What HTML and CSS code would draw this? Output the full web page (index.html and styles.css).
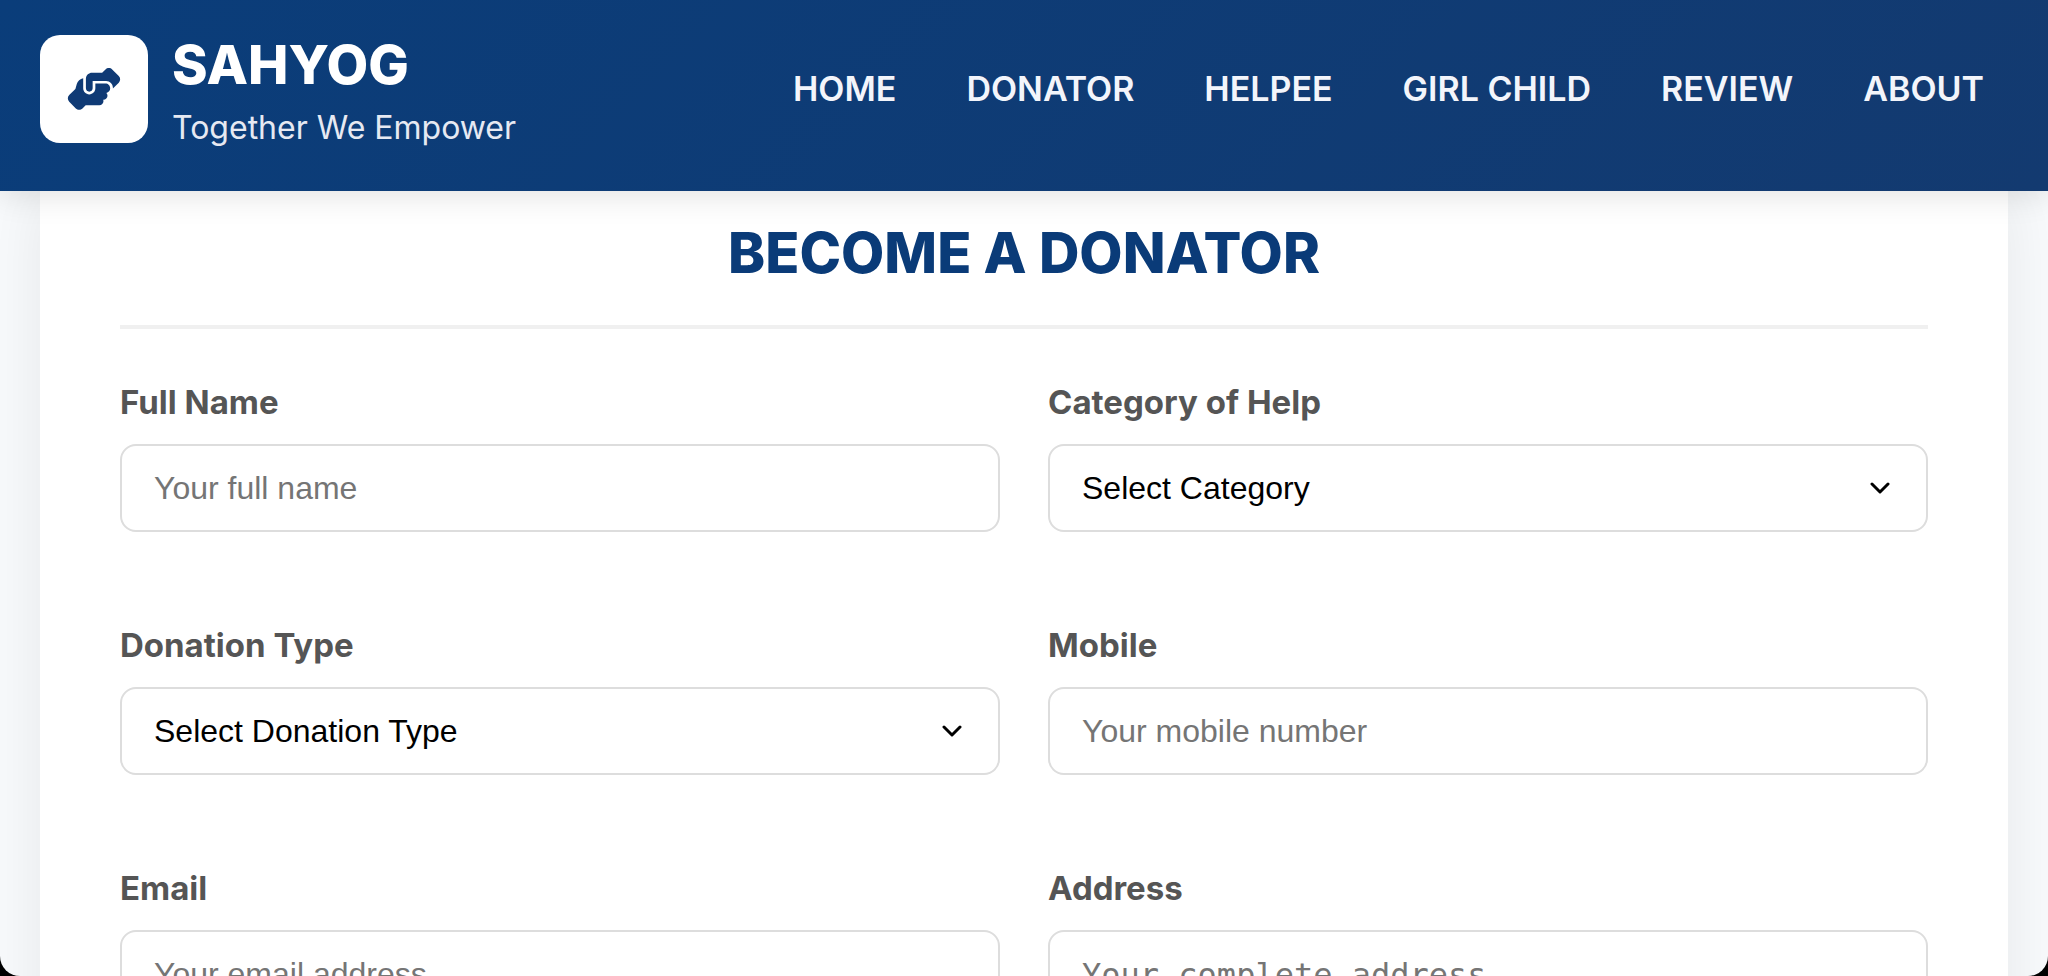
FILE: index.html
```html
<!DOCTYPE html>
<html lang="en">
<head>
<meta charset="utf-8">
<meta name="viewport" content="width=device-width, initial-scale=1">
<title>Sahyog - Become a Donator</title>
<link rel="stylesheet" href="styles.css">
</head>
<body>
<div class="app">
  <header class="header">
    <div class="brand">
      <div class="logo">
        <svg class="logo-icon" viewBox="0 0 640 512" aria-hidden="true"><path d="M544 248v3.3l69.7-69.7c21.9-21.9 21.9-57.3 0-79.2L535.6 24.4c-21.9-21.9-57.3-21.9-79.2 0L416.3 64.5c-2.7-.3-5.5-.5-8.3-.5H296c-37.1 0-67.6 28-71.6 64H224V248c0 22.1 17.9 40 40 40s40-17.9 40-40V160H464c44.2 0 80 35.8 80 80v8zM336 192v56c0 39.8-32.2 72-72 72s-72-32.2-72-72V129.4c-35.9 6.2-65.8 32.3-76 68.2L99.5 255.2 26.3 328.4c-21.9 21.9-21.9 57.3 0 79.2l78.1 78.1c21.9 21.9 57.3 21.9 79.2 0l37.7-37.7c.9 0 1.8 .1 2.7 .1H384c26.5 0 48-21.5 48-48c0-5.6-1-11-2.7-16H432c26.5 0 48-21.5 48-48c0-12.8-5-24.4-13.2-33c25.7-5 45.1-27.6 45.2-54.8v-.4c-.1-30.8-25.1-55.8-56-55.8l-120 0z"/></svg>
      </div>
      <div class="brand-text">
        <div class="brand-name">SAHYOG</div>
        <div class="tagline">Together We Empower</div>
      </div>
    </div>
    <nav class="nav">
      <a class="nav-link" href="#home">HOME</a>
      <a class="nav-link" href="#donator">DONATOR</a>
      <a class="nav-link" href="#helpee">HELPEE</a>
      <a class="nav-link" href="#girl-child">GIRL CHILD</a>
      <a class="nav-link" href="#review">REVIEW</a>
      <a class="nav-link" href="#about">ABOUT</a>
    </nav>
  </header>
  <main class="main">
    <section class="card">
      <h1 class="title">BECOME A DONATOR</h1>
      <form class="form">
        <div class="field">
          <label class="label" for="name">Full Name</label>
          <input class="control" id="name" type="text" placeholder="Your full name">
        </div>
        <div class="field">
          <label class="label" for="category">Category of Help</label>
          <div class="select-wrap">
            <select class="control select" id="category"><option>Select Category</option></select>
            <svg class="chevron" viewBox="0 0 20 12" aria-hidden="true"><path d="M2 2l8 8 8-8"/></svg>
          </div>
        </div>
        <div class="field">
          <label class="label" for="donation">Donation Type</label>
          <div class="select-wrap">
            <select class="control select" id="donation"><option>Select Donation Type</option></select>
            <svg class="chevron" viewBox="0 0 20 12" aria-hidden="true"><path d="M2 2l8 8 8-8"/></svg>
          </div>
        </div>
        <div class="field">
          <label class="label" for="mobile">Mobile</label>
          <input class="control" id="mobile" type="tel" placeholder="Your mobile number">
        </div>
        <div class="field">
          <label class="label" for="email">Email</label>
          <input class="control" id="email" type="email" placeholder="Your email address">
        </div>
        <div class="field">
          <label class="label" for="address">Address</label>
          <textarea class="control textarea" id="address" placeholder="Your complete address"></textarea>
        </div>
      </form>
    </section>
  </main>
</div>
</body>
</html>
```
FILE: styles.css
```css
* { box-sizing: border-box; }

body {
  margin: 0;
  background: #000;
  font-family: Inter, "Liberation Sans", sans-serif;
}

.app {
  display: flex;
  flex-direction: column;
  height: 100vh;
  overflow: hidden;
  background: #f8fafc;
  border-radius: 0 0 20px 20px;
}

.header {
  position: relative;
  z-index: 1;
  flex: none;
  display: flex;
  align-items: center;
  justify-content: space-between;
  padding: 26px 40px 39px;
  background: linear-gradient(135deg, #0a3d7a, #133a70);
  box-shadow: 0 4px 30px rgba(0, 0, 0, 0.12);
}

.brand {
  display: flex;
  align-items: center;
  gap: 24px;
}

.logo {
  display: grid;
  place-items: center;
  width: 108px;
  height: 108px;
  background: #fff;
  border-radius: 20px;
}

.logo-icon {
  width: 54px;
  height: 44px;
  fill: #0f3a75;
}

.brand-name {
  color: #fff;
  font-size: 54px;
  font-weight: 800;
  line-height: 78px;
}

.tagline {
  color: #e6e9f2;
  font-size: 32px;
  line-height: 48px;
}

.nav {
  display: flex;
  gap: 22px;
}

.nav-link {
  padding: 0 24px;
  color: #f3f5fb;
  font-size: 34px;
  font-weight: 600;
  line-height: 52px;
  text-decoration: none;
  white-space: nowrap;
}

.main {
  flex: 1;
  min-height: 0;
  padding: 0 40px;
  overflow: auto;
  scrollbar-width: none;
}

.card {
  padding: 24px 80px 80px;
  background: #fff;
  box-shadow: 0 0 60px rgba(0, 0, 0, 0.08);
}

.title {
  margin: 0 0 48px;
  padding-bottom: 34px;
  border-bottom: 4px solid #f0f0f0;
  color: #0a3b78;
  font-size: 56px;
  font-weight: 800;
  line-height: 76px;
  text-align: center;
}

.form {
  display: grid;
  grid-template-columns: 1fr 1fr;
  gap: 88px 48px;
}

.field {
  display: flex;
  flex-direction: column;
  gap: 16px;
}

.label {
  color: #555;
  font-size: 33px;
  font-weight: 700;
  line-height: 51px;
}

.control {
  display: block;
  width: 100%;
  height: 88px;
  padding: 0 32px;
  border: 2px solid #ddd;
  border-radius: 16px;
  background: #fff;
  color: #000;
  font-family: "Liberation Sans", Arial, sans-serif;
  font-size: 32px;
}

.control::placeholder { color: #757575; }

.select-wrap { position: relative; }

.select { appearance: none; }

.chevron {
  position: absolute;
  top: 38px;
  right: 38px;
  width: 20px;
  height: 12px;
  fill: none;
  stroke: #000;
  stroke-width: 3;
  stroke-linecap: round;
  stroke-linejoin: round;
  pointer-events: none;
}

.textarea {
  height: 240px;
  padding: 24px 32px;
  font-family: "DejaVu Sans Mono", monospace;
  resize: vertical;
}
```
